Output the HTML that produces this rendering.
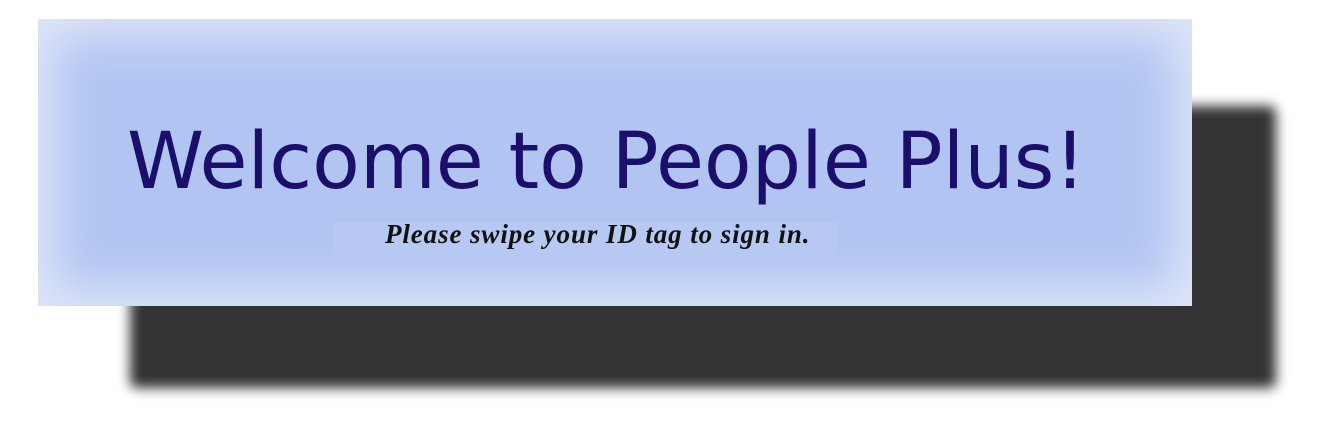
<!DOCTYPE html>
<html><head><meta charset="utf-8"><style>
html,body{margin:0;padding:0;background:#fff;width:1318px;height:447px;overflow:hidden;position:relative}
.sh{position:absolute;left:130px;top:106px;width:1146px;height:282px;background:#333;filter:blur(6px);border-radius:6px}
.p{position:absolute;left:38px;top:19px;width:1154px;height:287px;background:#b2c5f2;box-shadow:inset 0 0 45px 18px #dde5f8}
.t{position:absolute;left:127px;top:123px;font-family:"DejaVu Sans",Verdana,sans-serif;font-size:78px;color:#1b0f6b;white-space:nowrap;line-height:1;letter-spacing:0}
.bar{position:absolute;left:333px;top:222px;width:504px;height:34px;background:#b7c9f3}
.s{position:absolute;left:385px;top:219px;font-family:"Liberation Serif",serif;font-weight:bold;font-style:italic;font-size:27px;color:#111;white-space:nowrap;letter-spacing:0.9px}
</style></head><body>
<div class="sh"></div>
<div class="p"></div>
<div class="bar"></div>
<div class="t">Welcome to People Plus!</div>
<div class="s">Please swipe your ID tag to sign in.</div>
</body></html>
